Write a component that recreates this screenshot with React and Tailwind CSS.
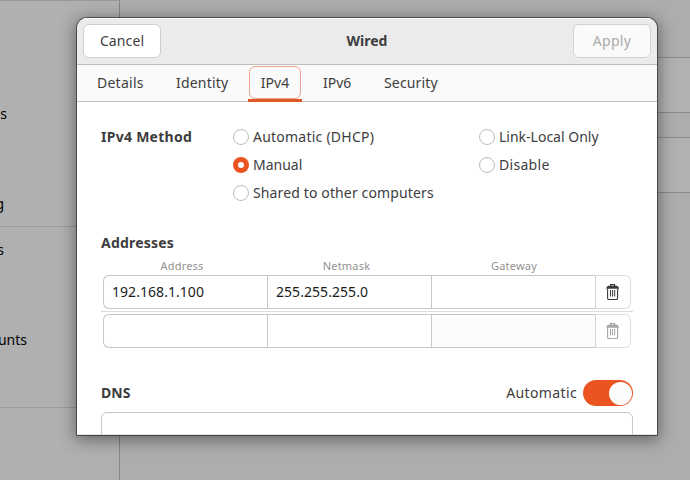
import React from "react";

function Trash({ className }) {
  return (
    <svg width="14" height="16" viewBox="0 0 14 16" className={className} fill="none" stroke="currentColor">
      <path d="M4.600 2V.7h4V2" strokeWidth="1.2" />
      <path d="M2.500 1.700h8.200c1 .3 1.900 1.200 2.200 2.300v.8H.3V4c.3-1.100 1.200-2 2.200-2.300z" fill="currentColor" stroke="none" />
      <path d="M1.600 4.800v9.400c0 .8.500 1.300 1.300 1.300h7.400c.8 0 1.300-.5 1.300-1.300V4.800" strokeWidth="1.100" />
      <path d="M4.500 6v6.500M6.600 6v6.500M8.700 6v6.500" strokeWidth="1" />
    </svg>
  );
}

function Radio({ checked, children, className }) {
  return (
    <label className="flex h-7 items-center gap-1">
      {checked ? (
        <span className="flex size-4 items-center justify-center rounded-full bg-[#e95420]">
          <span className="size-1.5 rounded-full bg-white" />
        </span>
      ) : (
        <span className="size-4 rounded-full border border-[#bdbdbd] bg-white" />
      )}
      <span className={className}>{children}</span>
    </label>
  );
}

function AddressRow({ address, netmask, disabled }) {
  return (
    <div className="ml-0.5 flex h-[34px] w-[528px] text-[#1c1c1c]">
      <div className="flex w-[164px] items-center rounded-l-md border border-r-0 border-[#c6c6c6] bg-white pl-[8px] tracking-[0.05px]">{address}</div>
      <div className="flex w-[164px] items-center border border-r-0 border-[#c6c6c6] bg-white pl-[8px] tracking-[0.05px]">{netmask}</div>
      <div className={disabled ? "w-[164px] border border-r-0 border-[#c6c6c6] bg-[#fcfcfc]" : "w-[164px] border border-r-0 border-[#c6c6c6] bg-white"} />
      <div className="flex w-9 items-center justify-center rounded-r-md border border-[#dedede] border-l-[#d2d2d2] bg-white">
        <Trash className={disabled ? "text-[#a5a5a5]" : "text-[#3b3b3b]"} />
      </div>
    </div>
  );
}

function Background() {
  return (
    <div className="flex h-full text-black">
      <div className="flex w-[120px] flex-col border-t border-r border-t-[#989898] border-r-[#868686] bg-[#b0b0b0]">
        <div className="h-[226px] border-b border-[#9b9b9b] pt-[103px]">
          <div className="h-5 w-[7px]"><span className="float-right">s</span></div>
          <div className="mt-[70px] h-5 w-[4px]"><span className="float-right">g</span></div>
        </div>
        <div className="h-[181px] border-b border-[#9b9b9b] pt-[13px]">
          <div className="h-5 w-[4px]"><span className="float-right">s</span></div>
          <div className="mt-[70px] h-5 w-[27px]"><span className="float-right">unts</span></div>
        </div>
      </div>
      <div className="flex flex-1 flex-col bg-[#adadad]">
        <div className="h-[57px]" />
        <div className="h-14 border-y border-[#8c8c8c] bg-[#b1b1b1]" />
        <div className="h-6" />
        <div className="h-14 border-y border-[#8c8c8c] bg-[#b1b1b1]" />
      </div>
    </div>
  );
}

export default function App() {
  return (
    <div className="relative h-[480px] w-[690px] overflow-hidden bg-[#adadad] font-['Noto_Sans',sans-serif] text-[14px] leading-5 text-[#3d3d3d]">
      <Background />
      <div className="absolute top-[18px] left-[77px] flex h-[417px] w-[580px] flex-col overflow-hidden rounded-t-[10px] bg-white shadow-[0_0_0_1px_rgba(0,0,0,0.45),0_3px_16px_2px_rgba(0,0,0,0.42)]">
        <header className="flex h-[47px] shrink-0 items-center justify-between border-b border-[#bfbfbf] bg-[#ebebeb] px-1.5 shadow-[inset_0_1px_0_#fafafa]">
          <button className="h-[34px] w-[78px] rounded-md border border-[#cfcfcf] bg-white tracking-[0.1px]">Cancel</button>
          <h1 className="font-bold">Wired</h1>
          <button className="h-[34px] w-[78px] rounded-md border border-[#d2d2d2] bg-[#fafafa] tracking-[0.3px] text-[#aaaaaa]">Apply</button>
        </header>
        <nav className="flex h-[37px] shrink-0 items-center border-b border-[#c4c4c4] bg-[#fafafa]">
          <span className="w-[99px] pl-5 tracking-[0.25px]">Details</span>
          <span className="w-[72px] tracking-[0.2px]">Identity</span>
          <span className="-mb-px flex h-[37px] w-[54px] flex-col border-b-[3px] border-[#e0592a] px-px pt-px">
            <span className="flex h-[33px] items-center justify-center rounded-md border border-[#efa48c]">IPv4</span>
          </span>
          <span className="w-[82px] pl-[21px]">IPv6</span>
          <span className="tracking-[0.15px]">Security</span>
        </nav>
        <main className="flex flex-1 flex-col overflow-hidden px-6 pt-[21px] shadow-[inset_0_-1px_0_#e4e4e4]">
          <section className="flex h-21 shrink-0">
            <h2 className="w-[132px] pt-1 font-bold tracking-[0.27px]">IPv4 Method</h2>
            <div className="w-[246px]">
              <Radio className="tracking-[0.23px]">Automatic (DHCP)</Radio>
              <Radio checked>Manual</Radio>
              <Radio className="tracking-[0.13px]">Shared to other computers</Radio>
            </div>
            <div>
              <Radio>Link-Local Only</Radio>
              <Radio className="tracking-[0.3px]">Disable</Radio>
            </div>
          </section>
          <section className="mt-[26px] shrink-0">
            <h2 className="font-bold tracking-[0.2px]">Addresses</h2>
            <div className="ml-0.5 flex h-[22px] items-center text-center text-[11px] tracking-[0.2px] text-[#929292]">
              <span className="w-[158px] pt-[3px]">Address</span>
              <span className="w-[171px] pt-[3px]">Netmask</span>
              <span className="w-[164px] pt-[3px]">Gateway</span>
            </div>
            <AddressRow address="192.168.1.100" netmask="255.255.255.0" />
            <div className="my-0.5 h-px bg-[#dcdcdc]" />
            <AddressRow disabled />
          </section>
          <section className="mt-8 shrink-0">
            <div className="flex h-[26px] items-center">
              <h2 className="flex-1 font-bold">DNS</h2>
              <span className="mr-1.5 tracking-[0.37px]">Automatic</span>
              <span className="flex h-[26px] w-[50px] items-center justify-end rounded-full bg-[#e95420] pr-px">
                <span className="size-[23px] rounded-full bg-[#fcfcfc]" />
              </span>
            </div>
            <div className="mt-1.5 h-10 rounded-md border border-[#c6c6c6]" />
          </section>
        </main>
      </div>
    </div>
  );
}
